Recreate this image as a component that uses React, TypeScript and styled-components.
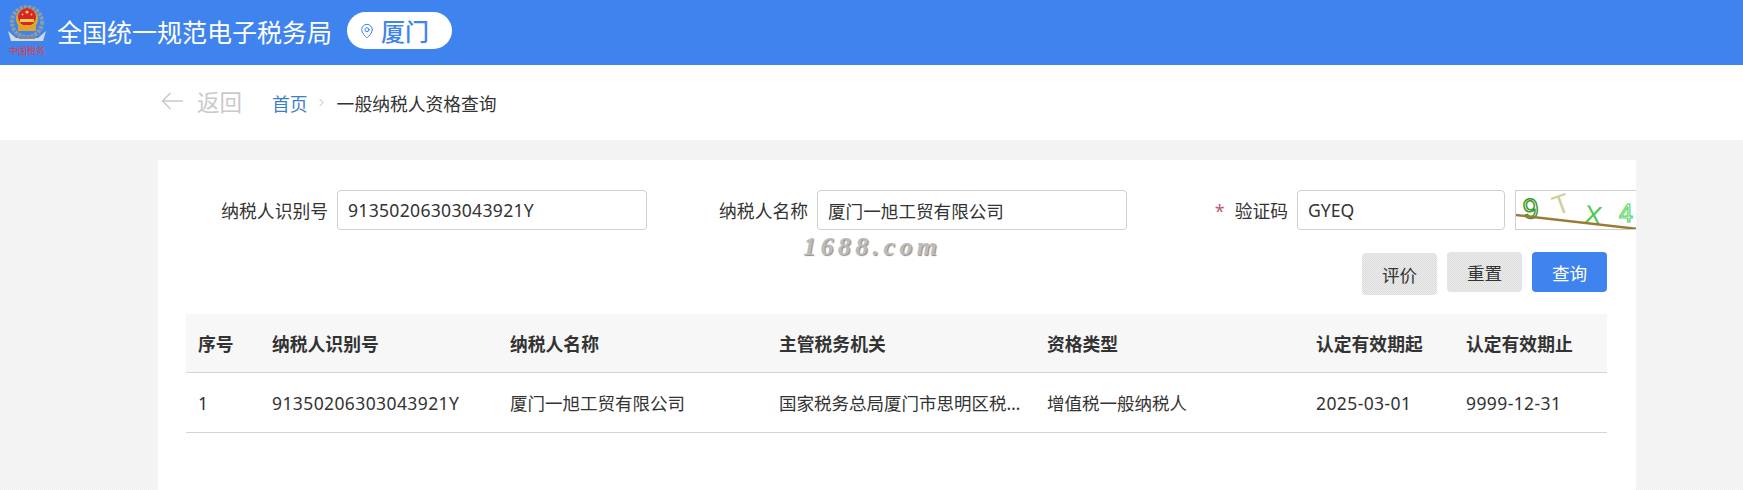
import styled, { createGlobalStyle } from 'styled-components';
import { ChevronRight, MapPin } from 'lucide-react';

const BLUE = '#3f84ee';
const FONT = '"Noto Sans", "Noto Sans CJK SC", sans-serif';
const dither = (a: string, b: string) =>
  `repeating-conic-gradient(${a} 0 25%, ${b} 0 50%) 0 0 / 2px 2px`;

const GlobalStyle = createGlobalStyle`
  html, body { margin: 0; padding: 0; background: #fff; }
  body { font-family: ${FONT}; color: #333; }
  * { box-sizing: border-box; }
`;

const Page = styled.div`
  width: 1743px;
  height: 490px;
  display: flex;
  flex-direction: column;
  overflow: hidden;
`;

const Header = styled.header`
  height: 65px;
  flex: none;
  display: flex;
  align-items: center;
  padding: 0 0 4px 7px;
  background: ${BLUE};
`;

const SiteTitle = styled.h1`
  margin: 0 15px 0 10px;
  font-size: 25px;
  font-weight: 400;
  color: #fff;
  white-space: nowrap;
`;

const CityPill = styled.div`
  width: 105px;
  height: 37px;
  display: flex;
  align-items: center;
  gap: 6px;
  padding-left: 12px;
  border-radius: 19px;
  background: #fff;
  color: ${BLUE};
  font-size: 24px;
  font-weight: 500;
`;

const CrumbBar = styled.div`
  height: 75px;
  flex: none;
  display: flex;
  align-items: center;
  padding-left: 161px;
  background: #fff;
`;

const BackLink = styled.div`
  display: flex;
  align-items: center;
  gap: 14px;
  margin-right: 30px;
  margin-top: -3px;
  color: #c9c9c9;
  font-size: 22.5px;
`;

const CrumbHome = styled.span`
  color: #3b7fc6;
  font-size: 17.8px;
`;

const CrumbSeparator = styled.span`
  display: flex;
  margin: 0 9px 0 7px;
  color: #aaa;
`;

const CrumbCurrent = styled.span`
  font-size: 17.8px;
  color: #333;
`;

const Main = styled.main`
  flex: 1;
  display: flex;
  padding: 20px 107px 0 158px;
  background: ${dither('#efefef', '#f8f8f8')};
`;

const Card = styled.section`
  position: relative;
  width: 1478px;
  padding: 30px 0 0 28px;
  background: #fff;
  overflow: hidden;
`;

const FormRow = styled.div`
  display: grid;
  grid-template-columns: repeat(3, 461px);
  column-gap: 19px;
`;

const Field = styled.div`
  display: flex;
  align-items: center;
  gap: 9px;
`;

const FieldLabel = styled.label`
  flex: none;
  width: 142px;
  text-align: right;
  font-size: 17.8px;
  white-space: nowrap;
`;

const Required = styled.span`
  margin-right: 10px;
  color: #c0576a;
`;

const TextInput = styled.input<{ $width: number; $latin?: boolean }>`
  flex: none;
  width: ${({ $width }) => $width}px;
  height: 40px;
  padding: 0 10px;
  border: 1px solid #cfcfcf;
  border-radius: 4px;
  outline: none;
  background: #fff;
  color: #333;
  font-family: ${FONT};
  font-size: 17.6px;
  letter-spacing: ${({ $latin }) => ($latin ? 0.28 : 0)}px;
`;

const CaptchaBox = styled.div`
  flex: none;
  width: 130px;
  height: 40px;
  margin-left: 1px;
  border: 1px solid #cfcfcf;
`;

const Watermark = styled.div`
  position: absolute;
  left: 645px;
  top: 72px;
  color: #bcbcbc;
  font-family: 'Liberation Serif', serif;
  font-size: 26px;
  font-style: italic;
  font-weight: 700;
  letter-spacing: 4.4px;
  text-shadow: 1px 1px 1px #8a8a8a;
`;

const ButtonRow = styled.div`
  display: flex;
  justify-content: flex-end;
  align-items: flex-start;
  gap: 10px;
  width: 1421px;
  margin-top: 22px;
`;

const ActionButton = styled.button<{ $primary?: boolean; $tall?: boolean }>`
  width: 75px;
  height: ${({ $tall }) => ($tall ? 42 : 40)}px;
  margin-top: ${({ $tall }) => ($tall ? 1 : 0)}px;
  padding: 0;
  border: 0;
  border-radius: 4px;
  background: ${({ $primary }) => ($primary ? BLUE : dither('#dcdcdc', '#ececec'))};
  color: ${({ $primary }) => ($primary ? '#fff' : '#333')};
  font-family: ${FONT};
  font-size: 17.6px;
`;

const Table = styled.div`
  width: 1421px;
  margin-top: 19px;
`;

const TableRow = styled.div<{ $head?: boolean }>`
  display: grid;
  grid-template-columns: 74px 238px 269px 268px 269px 150px 1fr;
  align-items: center;
  height: ${({ $head }) => ($head ? 59 : 60)}px;
  border-bottom: 1px solid #d4d4d4;
  background: ${({ $head }) => ($head ? dither('#f3f3f3', '#fbfbfb') : '#fff')};
  font-size: ${({ $head }) => ($head ? 17.8 : 17.5)}px;
  font-weight: ${({ $head }) => ($head ? 700 : 400)};
`;

const Cell = styled.div<{ $latin?: boolean }>`
  padding: 0 12px;
  white-space: nowrap;
  overflow: hidden;
  text-overflow: ellipsis;
  letter-spacing: ${({ $latin }) => ($latin ? 0.4 : 0)}px;
`;

const COLUMNS = ['序号', '纳税人识别号', '纳税人名称', '主管税务机关', '资格类型', '认定有效期起', '认定有效期止'];
const ROWS = [
  ['1', '91350206303043921Y', '厦门一旭工贸有限公司', '国家税务总局厦门市思明区税务局', '增值税一般纳税人', '2025-03-01', '9999-12-31'],
];

function TaxEmblem() {
  return (
    <svg width="40" height="52" viewBox="0 0 40 52" style={{ flex: 'none' }}>
      <circle cx="20" cy="17" r="15" fill="none" stroke="#8f9ca3" strokeWidth="4" strokeDasharray="3 1.2" />
      <path d="M1 26 L9 33 L31 33 L39 26 L36 36 L4 36Z" fill="#d3d9dc" />
      <rect x="12" y="31" width="16" height="3" fill="#7f8c94" />
      <circle cx="20" cy="14" r="11" fill="#d9a92f" />
      <circle cx="20" cy="12" r="9" fill="#d8232a" />
      <circle cx="20" cy="7" r="1.6" fill="#f5d442" />
      <circle cx="15.5" cy="9.5" r="0.9" fill="#f5d442" />
      <circle cx="24.5" cy="9.5" r="0.9" fill="#f5d442" />
      <rect x="13" y="14" width="14" height="3" fill="#f2cf4a" />
      <rect x="11" y="20" width="18" height="6" rx="1" fill="#e2a32b" />
      <text x="20" y="49" textAnchor="middle" fill="#e0393c" fontSize="9" fontFamily="'Noto Sans CJK SC', sans-serif">中国税务</text>
    </svg>
  );
}

function BackArrow() {
  return (
    <svg width="22" height="18" viewBox="0 0 22 18" fill="none" stroke="currentColor" strokeWidth="1.5">
      <path d="M22 9H1.5M9.5 1L1.5 9l8 8" />
    </svg>
  );
}

function Captcha() {
  return (
    <svg width="128" height="38" viewBox="0 0 128 38" style={{ display: 'block' }}>
      <text x="7" y="27" fontSize="28" fontFamily="'Liberation Sans', sans-serif" fill="none" stroke="#3f9a2e" strokeWidth="1.5" transform="rotate(-6 16 18)">9</text>
      <text x="37" y="23" fontSize="27" fontFamily="'Liberation Sans', sans-serif" fill="#cfcf9b" transform="rotate(-20 44 14)">T</text>
      <text x="69" y="33" fontSize="26" fontFamily="'Liberation Sans', sans-serif" fill="#4ccb4a" transform="rotate(8 78 22)">X</text>
      <text x="103" y="31" fontSize="25" fontFamily="'Liberation Sans', sans-serif" fill="none" stroke="#55d86a" strokeWidth="1.2">4</text>
      <path d="M0 24 L122 38" stroke="#9a7a34" strokeWidth="2.4" fill="none" />
    </svg>
  );
}

export default function App() {
  return (
    <Page>
      <GlobalStyle />
      <Header>
        <TaxEmblem />
        <SiteTitle>全国统一规范电子税务局</SiteTitle>
        <CityPill>
          <MapPin size={16} strokeWidth={1.5} />
          厦门
        </CityPill>
      </Header>
      <CrumbBar>
        <BackLink>
          <BackArrow />
          返回
        </BackLink>
        <CrumbHome>首页</CrumbHome>
        <CrumbSeparator>
          <ChevronRight size={13} strokeWidth={1.5} />
        </CrumbSeparator>
        <CrumbCurrent>一般纳税人资格查询</CrumbCurrent>
      </CrumbBar>
      <Main>
        <Card>
          <FormRow>
            <Field>
              <FieldLabel>纳税人识别号</FieldLabel>
              <TextInput $width={310} $latin value="91350206303043921Y" readOnly />
            </Field>
            <Field>
              <FieldLabel>纳税人名称</FieldLabel>
              <TextInput $width={310} value="厦门一旭工贸有限公司" readOnly />
            </Field>
            <Field>
              <FieldLabel>
                <Required>*</Required>验证码
              </FieldLabel>
              <TextInput $width={208} value="GYEQ" readOnly />
              <CaptchaBox>
                <Captcha />
              </CaptchaBox>
            </Field>
          </FormRow>
          <Watermark>1688.com</Watermark>
          <ButtonRow>
            <ActionButton $tall>评价</ActionButton>
            <ActionButton>重置</ActionButton>
            <ActionButton $primary>查询</ActionButton>
          </ButtonRow>
          <Table>
            <TableRow $head>
              {COLUMNS.map((column) => (
                <Cell key={column}>{column}</Cell>
              ))}
            </TableRow>
            {ROWS.map((row) => (
              <TableRow key={row[1]}>
                {row.map((value) => (
                  <Cell key={value} $latin={/^[\dA-Z-]+$/.test(value)}>
                    {value}
                  </Cell>
                ))}
              </TableRow>
            ))}
          </Table>
        </Card>
      </Main>
    </Page>
  );
}
